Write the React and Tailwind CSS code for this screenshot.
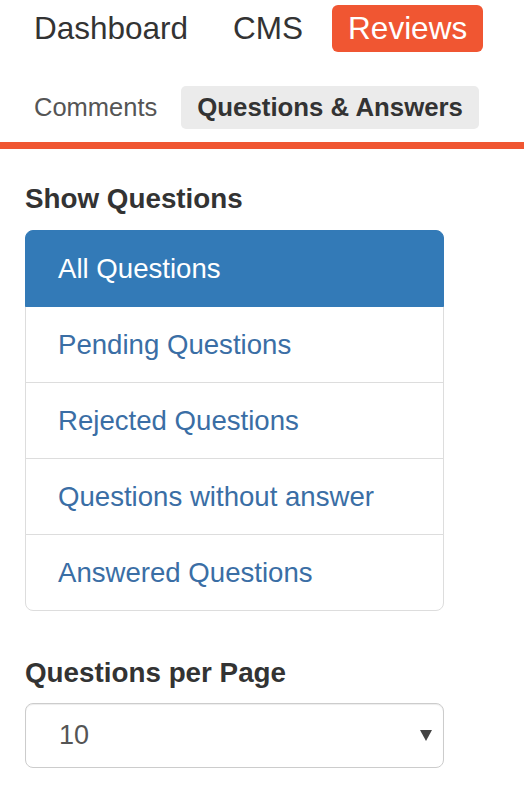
import React from 'react';

const filters = [
  'All Questions',
  'Pending Questions',
  'Rejected Questions',
  'Questions without answer',
  'Answered Questions',
];

export default function App() {
  return (
    <div className="w-[524px] min-h-[786px] bg-white text-[#333] font-['Liberation_Sans',Arial,sans-serif]">
      {/* top nav */}
      <nav className="flex items-center gap-[13px] pl-[18px] pt-[5px]">
        <a className="px-4 h-[47px] leading-[47px] text-[31.5px] text-[#333]">Dashboard</a>
        <a className="px-4 h-[47px] leading-[47px] text-[31.5px] text-[#333]">CMS</a>
        <a className="px-4 h-[47px] leading-[47px] text-[31.5px] text-white bg-[#f05632] rounded-[6px]">Reviews</a>
      </nav>

      {/* sub tabs */}
      <div className="flex items-center gap-2 pl-[18px] mt-[34px]">
        <a className="px-4 h-[43px] leading-[43px] text-[25.5px] text-[#555]">Comments</a>
        <a className="px-4 h-[43px] leading-[43px] text-[25.8px] font-bold text-[#333] bg-[#ebebeb] rounded-[5px]">Questions &amp; Answers</a>
      </div>

      <div className="h-[7px] bg-[#f05632] mt-[13px]" />

      <div className="pl-[25px]">
        <h3 className="mt-[34px] text-[27.8px] leading-[31px] font-bold text-[#333]">Show Questions</h3>

        <div className="mt-4 w-[419px] flex flex-col">
          {filters.map((label, i) => {
            const active = i === 0;
            const last = i === filters.length - 1;
            return (
              <a
                key={label}
                className={
                  'flex items-center h-[77px] pl-[32px] border text-[27.6px] ' +
                  (active ? 'bg-[#337ab7] border-[#337ab7] text-white z-10 rounded-t-[8px] ' : 'bg-white border-[#ddd] text-[#3a6ea5] ') +
                  (last ? 'rounded-b-[8px]' : '-mb-px')
                }
              >
                {label}
              </a>
            );
          })}
        </div>

        <h3 className="mt-[46px] text-[27.8px] leading-[31px] font-bold text-[#333]">Questions per Page</h3>

        <div className="mt-[15px] w-[419px] h-[65px] border border-[#ccc] rounded-[8px] flex items-center justify-between pl-[33px] pr-[11px] shadow-[inset_0_1px_1px_rgba(0,0,0,0.075)]">
          <span className="text-[27px] text-[#555]">10</span>
          <svg width="12" height="11" viewBox="0 0 12 11">
            <path d="M0 0 L12 0 L6 11 Z" fill="#444" />
          </svg>
        </div>
      </div>
    </div>
  );
}
